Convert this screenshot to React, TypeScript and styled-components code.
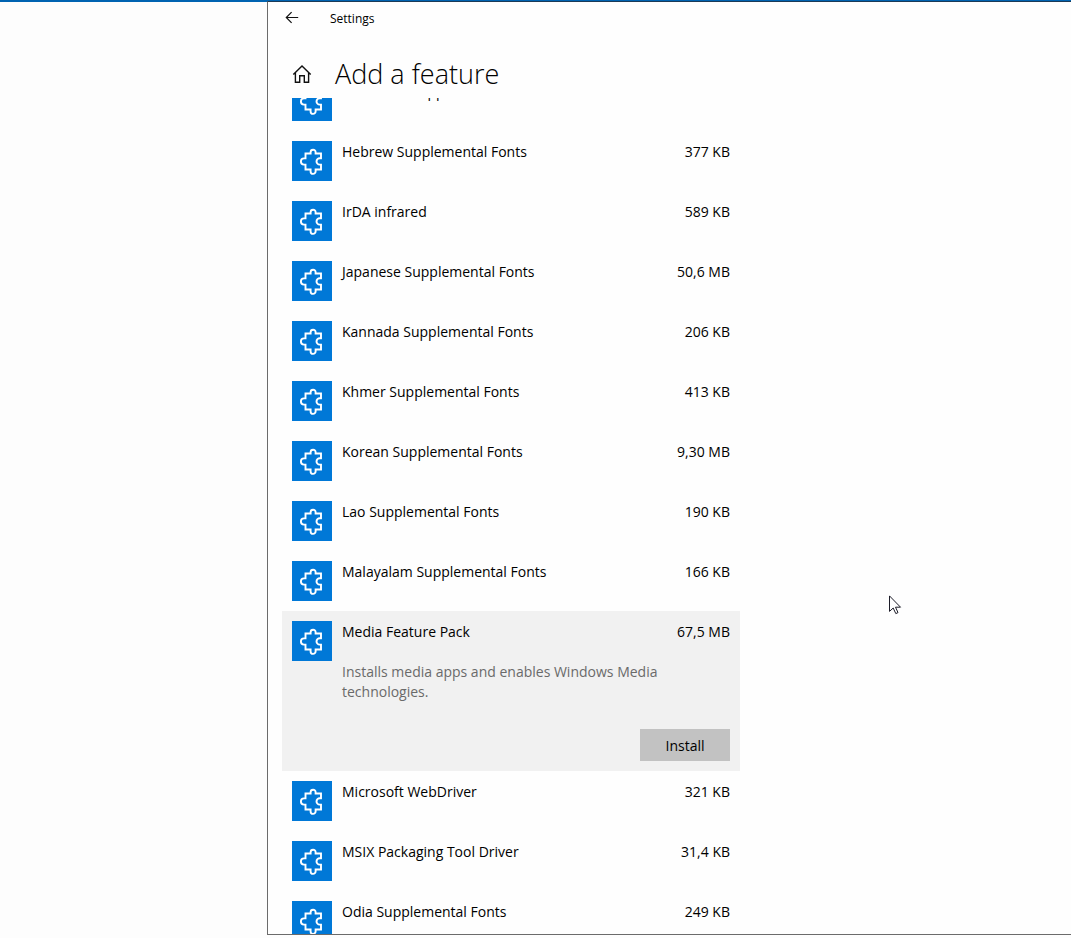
import React, { useLayoutEffect, useRef } from 'react';
import styled, { createGlobalStyle } from 'styled-components';

const GlobalStyle = createGlobalStyle`
  * { box-sizing: border-box; }
  body {
    margin: 0;
    background: #fdfdfd;
    color: #000;
    font-family: 'Segoe UI', 'Open Sans', 'Noto Sans', sans-serif;
    font-size: 14px;
    line-height: 20px;
  }
`;

const Desktop = styled.div`
  height: 100vh;
  padding: 1px 0 3px 267px;
  background: linear-gradient(#0063b1, #0063b1) 0 0 / 100% 2px no-repeat;
`;

const Window = styled.main`
  height: 100%;
  display: flex;
  flex-direction: column;
  border: solid #6b6b6b;
  border-width: 1px 0 1px 1px;
  border-top-color: #1b3a57;
  background: #fefefe;
`;

const TitleBar = styled.header`
  display: flex;
  align-items: center;
  height: 32px;
  padding-left: 16px;
  gap: 30px;
  font-size: 12px;
  line-height: 16px;
`;

const WindowTitle = styled.span`
  padding-top: 2px;
`;

const IconButton = styled.button`
  display: flex;
  padding: 0;
  border: 0;
  background: none;
  color: #111;
`;

const PageHeader = styled.div`
  display: flex;
  align-items: center;
  height: 64px;
  padding: 16px 0 0 24px;
  gap: 23px;
`;

const PageTitle = styled.h1`
  margin: 0;
  font-size: 27px;
  line-height: 36px;
  font-weight: 300;
`;

const Scroller = styled.div`
  flex: 1;
  min-height: 0;
  overflow-y: auto;
  scrollbar-width: none;
  padding-left: 14px;
`;

const FeatureList = styled.ul`
  list-style: none;
  margin: 0;
  padding: 0;
  max-width: 458px;
`;

const FeatureRow = styled.li<{ $selected?: boolean }>`
  display: flex;
  gap: 10px;
  padding: 10px;
  background: ${(p) => (p.$selected ? '#f1f1f1' : 'transparent')};
`;

const Tile = styled.span`
  flex: none;
  width: 40px;
  height: 40px;
  background: #0078d7;
`;

const RowBody = styled.div`
  flex: 1;
  display: flex;
  flex-direction: column;
  padding-top: 1px;
`;

const RowHead = styled.div`
  display: flex;
  justify-content: space-between;
`;

const Description = styled.p`
  margin: 20px 0 27px;
  padding-right: 50px;
  color: #6a6a6a;
`;

const InstallButton = styled.button`
  align-self: flex-end;
  width: 90px;
  height: 32px;
  padding: 2px 0 0;
  border: 0;
  background: #c2c2c2;
  color: #000;
  font: inherit;
`;

const Pointer = styled.svg`
  position: absolute;
  left: 889px;
  top: 595px;
`;

const PuzzleIcon = () => (
  <svg width="40" height="40" viewBox="0 0 40 40" fill="none" stroke="#fff" strokeWidth="1.9" aria-hidden="true">
    <path d="M13.5 12.5H18.6V11.2a2.5 2.5 0 0 1 5 0V12.5H29V17.2H27.7a3.2 3.2 0 0 0 0 6.4H29V28.5H23.6V30.4a2.5 2.5 0 0 1-5 0V28.5H13.5V23.6H12a3.1 3.1 0 0 1 0-6.2H13.5Z" />
  </svg>
);

interface Feature {
  name: string;
  size: string;
  description?: string;
}

const features: Feature[] = [
  { name: 'Gurmukhi Supplemental Fonts', size: '197 KB' },
  { name: 'Hebrew Supplemental Fonts', size: '377 KB' },
  { name: 'IrDA infrared', size: '589 KB' },
  { name: 'Japanese Supplemental Fonts', size: '50,6 MB' },
  { name: 'Kannada Supplemental Fonts', size: '206 KB' },
  { name: 'Khmer Supplemental Fonts', size: '413 KB' },
  { name: 'Korean Supplemental Fonts', size: '9,30 MB' },
  { name: 'Lao Supplemental Fonts', size: '190 KB' },
  { name: 'Malayalam Supplemental Fonts', size: '166 KB' },
  {
    name: 'Media Feature Pack',
    size: '67,5 MB',
    description: 'Installs media apps and enables Windows Media technologies.',
  },
  { name: 'Microsoft WebDriver', size: '321 KB' },
  { name: 'MSIX Packaging Tool Driver', size: '31,4 KB' },
  { name: 'Odia Supplemental Fonts', size: '249 KB' },
];

export default function App() {
  const scroller = useRef<HTMLDivElement>(null);

  // The list opens slightly scrolled, with its first row partly under the heading.
  useLayoutEffect(() => {
    if (scroller.current) scroller.current.scrollTop = 27;
  }, []);

  return (
    <Desktop>
      <GlobalStyle />
      <Window>
        <TitleBar>
          <IconButton type="button" aria-label="Back">
            <svg width="16" height="16" viewBox="0 0 16 16" fill="none" stroke="currentColor" strokeWidth="1.2">
              <path d="M14.2 7.5H2.4M7.6 2.2 2.3 7.5l5.3 5.3" />
            </svg>
          </IconButton>
          <WindowTitle>Settings</WindowTitle>
        </TitleBar>
        <PageHeader>
          <IconButton type="button" aria-label="Home">
            <svg width="20" height="20" viewBox="0 0 20 20" fill="none" stroke="currentColor" strokeWidth="1.4">
              <path d="M1.3 10.4 10 1.9l8.7 8.5M3.4 8.6V18.3H7.7V11.7H12.3V18.3H16.6V8.6" />
            </svg>
          </IconButton>
          <PageTitle>Add a feature</PageTitle>
        </PageHeader>
        <Scroller ref={scroller}>
          <FeatureList>
            {features.map((f) => (
              <FeatureRow key={f.name} $selected={!!f.description}>
                <Tile>
                  <PuzzleIcon />
                </Tile>
                <RowBody>
                  <RowHead>
                    <span>{f.name}</span>
                    <span>{f.size}</span>
                  </RowHead>
                  {f.description && (
                    <>
                      <Description>{f.description}</Description>
                      <InstallButton type="button">Install</InstallButton>
                    </>
                  )}
                </RowBody>
              </FeatureRow>
            ))}
          </FeatureList>
        </Scroller>
      </Window>
      <Pointer width="13" height="20" viewBox="0 0 13 20" fill="#fff" stroke="#1c1c28" strokeWidth="1" aria-hidden="true">
        <path d="M.5.9V16.4L4.2 13l2.6 5.6 2.2-1-2.5-5.4h5Z" />
      </Pointer>
    </Desktop>
  );
}
